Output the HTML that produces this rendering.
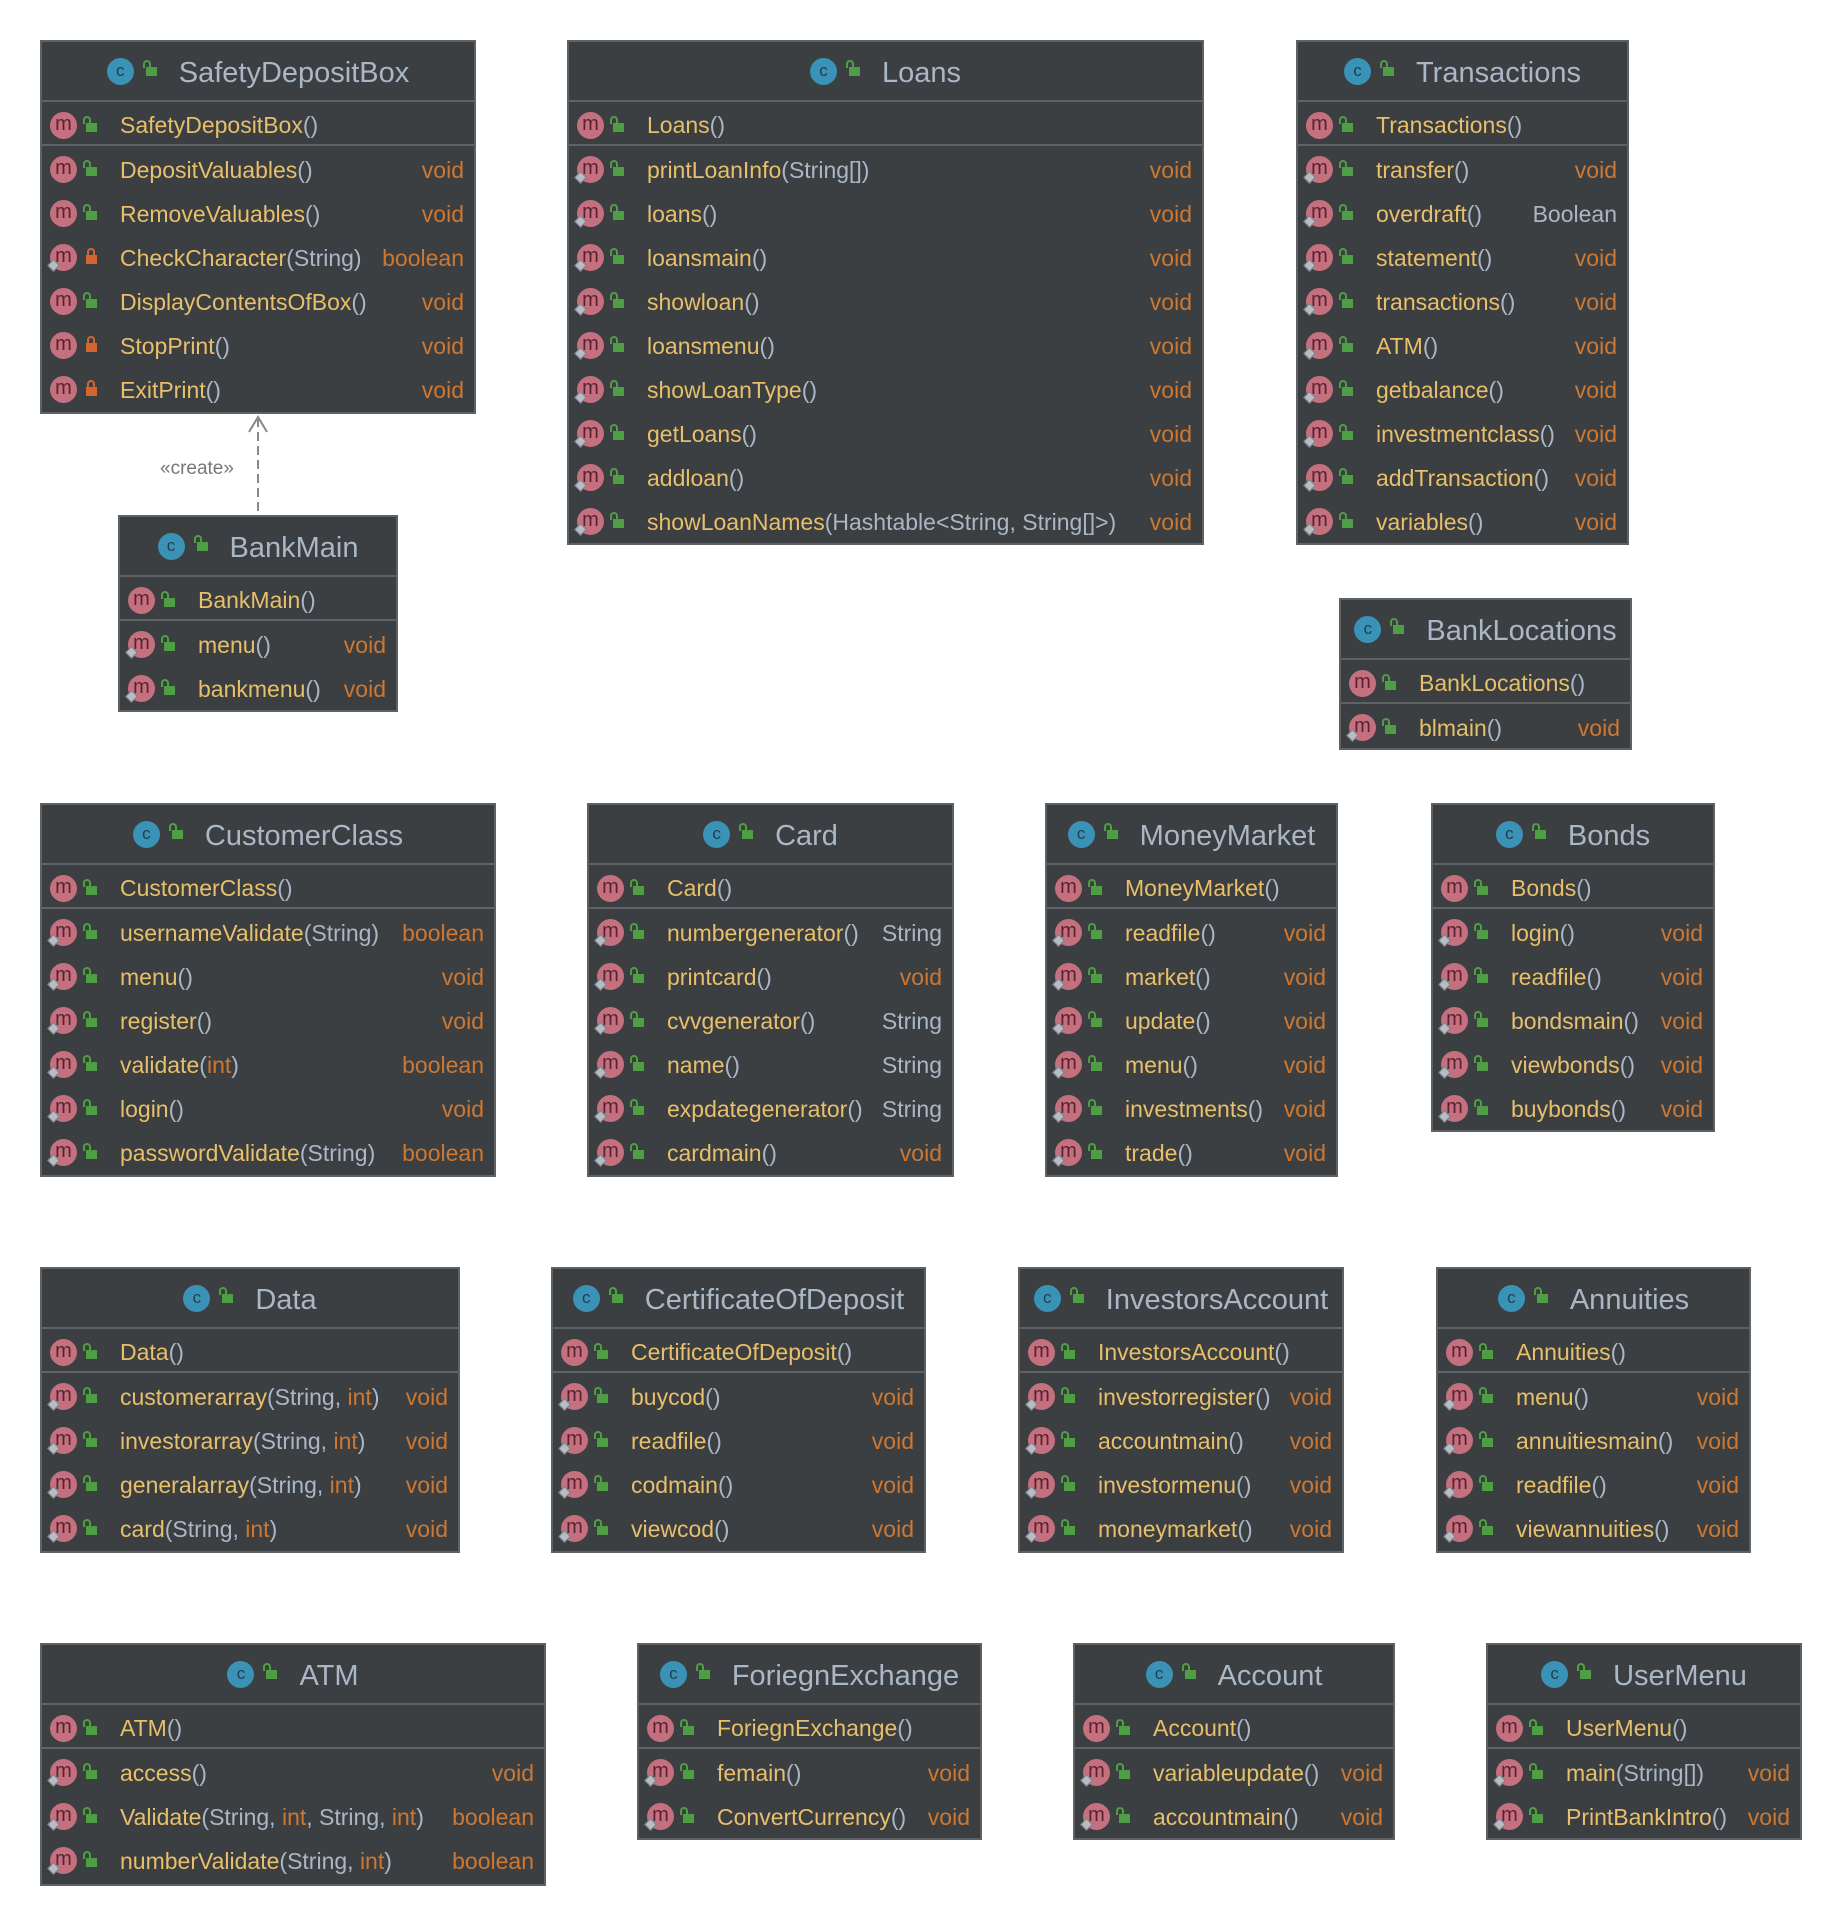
<!DOCTYPE html>
<html><head><meta charset="utf-8"><style>
body{margin:0;width:1842px;height:1924px;background:#fff;position:relative;overflow:hidden;font-family:"Liberation Sans",sans-serif}
.b{position:absolute;background:#3c3f41;border:2px solid #5f6264;box-sizing:border-box;overflow:hidden}
.h{height:58px;padding-top:4px;box-sizing:border-box;display:flex;justify-content:center;align-items:center;font-size:29px;color:#a9b7c6;white-space:nowrap}
.h .ci{width:27px;height:27px;border-radius:50%;background:#3a92b6;color:#1f3f50;font-size:17px;display:inline-flex;align-items:center;justify-content:center;margin-right:12px;margin-top:-4px;flex:none}
.h .lk{margin-right:22px;margin-top:-4px}
.r{height:44px;padding-top:4px;box-sizing:border-box;display:flex;align-items:center;position:relative;padding-left:78px;padding-right:10px;font-size:23px;white-space:nowrap;color:#e8bf6a}
.c{height:46px;border-top:2px solid #5f6264;border-bottom:2px solid #5f6264}
.m{position:absolute;left:8px;top:10px;width:27px;height:27px;border-radius:50%;background:#c5707f;color:#5a2230;font-size:20px;line-height:24px;text-align:center;font-style:normal}
.c ~ .r .m::after{content:"";position:absolute;left:-1px;top:17px;width:7px;height:7px;background:#b8bcc4;transform:rotate(45deg);border:1px solid #7a7e84}
#sdb .r .m::after{display:none}
#sdb .r .m.d::after{display:block}
.lk{display:inline-block;width:11px;height:9px;background:#4f9e46;position:relative;flex:none}
.lk:before{content:"";position:absolute;left:-3px;top:-7px;width:4px;height:6px;border:2px solid #4f9e46;border-bottom:none;border-radius:4px 4px 0 0}
.r .lk{position:absolute;left:44px;top:21px}
.r .lk.pv{background:#d5652f}
.r .lk.pv:before{left:1px;border-color:#d5652f}
.p{color:#a9b7c6}
.o{color:#cc7832}
.t{margin-left:auto;color:#cc7832;padding-left:12px}
.t.g{color:#a9b7c6}
</style></head><body>

<svg style="position:absolute;left:0;top:0" width="1842" height="1924">
<line x1="258" y1="418" x2="258" y2="515" stroke="#888" stroke-width="2" stroke-dasharray="9,5"/>
<polyline points="249,432 258,417 267,432" fill="none" stroke="#888" stroke-width="2"/>
<text x="160" y="474" font-family="Liberation Sans" font-size="19" fill="#777">«create»</text>
</svg>

<div class="b" id="sdb" style="left:40px;top:40px;width:436px;height:374px">
<div class="h"><span class="ci">c</span><span class="lk"></span>SafetyDepositBox</div>
<div class="r c"><i class="m">m</i><span class="lk"></span>SafetyDepositBox<span class="p">()</span></div>
<div class="r"><i class="m">m</i><span class="lk"></span>DepositValuables<span class="p">()</span><span class="t">void</span></div>
<div class="r"><i class="m">m</i><span class="lk"></span>RemoveValuables<span class="p">()</span><span class="t">void</span></div>
<div class="r"><i class="m d">m</i><span class="lk pv"></span>CheckCharacter<span class="p">(String)</span><span class="t">boolean</span></div>
<div class="r"><i class="m">m</i><span class="lk"></span>DisplayContentsOfBox<span class="p">()</span><span class="t">void</span></div>
<div class="r"><i class="m">m</i><span class="lk pv"></span>StopPrint<span class="p">()</span><span class="t">void</span></div>
<div class="r"><i class="m">m</i><span class="lk pv"></span>ExitPrint<span class="p">()</span><span class="t">void</span></div>
</div>

<div class="b" style="left:567px;top:40px;width:637px;height:505px">
<div class="h"><span class="ci">c</span><span class="lk"></span>Loans</div>
<div class="r c"><i class="m">m</i><span class="lk"></span>Loans<span class="p">()</span></div>
<div class="r"><i class="m">m</i><span class="lk"></span>printLoanInfo<span class="p">(String[])</span><span class="t">void</span></div>
<div class="r"><i class="m">m</i><span class="lk"></span>loans<span class="p">()</span><span class="t">void</span></div>
<div class="r"><i class="m">m</i><span class="lk"></span>loansmain<span class="p">()</span><span class="t">void</span></div>
<div class="r"><i class="m">m</i><span class="lk"></span>showloan<span class="p">()</span><span class="t">void</span></div>
<div class="r"><i class="m">m</i><span class="lk"></span>loansmenu<span class="p">()</span><span class="t">void</span></div>
<div class="r"><i class="m">m</i><span class="lk"></span>showLoanType<span class="p">()</span><span class="t">void</span></div>
<div class="r"><i class="m">m</i><span class="lk"></span>getLoans<span class="p">()</span><span class="t">void</span></div>
<div class="r"><i class="m">m</i><span class="lk"></span>addloan<span class="p">()</span><span class="t">void</span></div>
<div class="r"><i class="m">m</i><span class="lk"></span>showLoanNames<span class="p">(Hashtable&lt;String, String[]&gt;)</span><span class="t">void</span></div>
</div>

<div class="b" style="left:1296px;top:40px;width:333px;height:505px">
<div class="h"><span class="ci">c</span><span class="lk"></span>Transactions</div>
<div class="r c"><i class="m">m</i><span class="lk"></span>Transactions<span class="p">()</span></div>
<div class="r"><i class="m">m</i><span class="lk"></span>transfer<span class="p">()</span><span class="t">void</span></div>
<div class="r"><i class="m">m</i><span class="lk"></span>overdraft<span class="p">()</span><span class="t g">Boolean</span></div>
<div class="r"><i class="m">m</i><span class="lk"></span>statement<span class="p">()</span><span class="t">void</span></div>
<div class="r"><i class="m">m</i><span class="lk"></span>transactions<span class="p">()</span><span class="t">void</span></div>
<div class="r"><i class="m">m</i><span class="lk"></span>ATM<span class="p">()</span><span class="t">void</span></div>
<div class="r"><i class="m">m</i><span class="lk"></span>getbalance<span class="p">()</span><span class="t">void</span></div>
<div class="r"><i class="m">m</i><span class="lk"></span>investmentclass<span class="p">()</span><span class="t">void</span></div>
<div class="r"><i class="m">m</i><span class="lk"></span>addTransaction<span class="p">()</span><span class="t">void</span></div>
<div class="r"><i class="m">m</i><span class="lk"></span>variables<span class="p">()</span><span class="t">void</span></div>
</div>

<div class="b" style="left:118px;top:515px;width:280px;height:197px">
<div class="h"><span class="ci">c</span><span class="lk"></span>BankMain</div>
<div class="r c"><i class="m">m</i><span class="lk"></span>BankMain<span class="p">()</span></div>
<div class="r"><i class="m">m</i><span class="lk"></span>menu<span class="p">()</span><span class="t">void</span></div>
<div class="r"><i class="m">m</i><span class="lk"></span>bankmenu<span class="p">()</span><span class="t">void</span></div>
</div>

<div class="b" style="left:1339px;top:598px;width:293px;height:152px">
<div class="h"><span class="ci">c</span><span class="lk"></span>BankLocations</div>
<div class="r c"><i class="m">m</i><span class="lk"></span>BankLocations<span class="p">()</span></div>
<div class="r"><i class="m">m</i><span class="lk"></span>blmain<span class="p">()</span><span class="t">void</span></div>
</div>

<div class="b" style="left:40px;top:803px;width:456px;height:374px">
<div class="h"><span class="ci">c</span><span class="lk"></span>CustomerClass</div>
<div class="r c"><i class="m">m</i><span class="lk"></span>CustomerClass<span class="p">()</span></div>
<div class="r"><i class="m">m</i><span class="lk"></span>usernameValidate<span class="p">(String)</span><span class="t">boolean</span></div>
<div class="r"><i class="m">m</i><span class="lk"></span>menu<span class="p">()</span><span class="t">void</span></div>
<div class="r"><i class="m">m</i><span class="lk"></span>register<span class="p">()</span><span class="t">void</span></div>
<div class="r"><i class="m">m</i><span class="lk"></span>validate<span class="p">(</span><span class="o">int</span><span class="p">)</span><span class="t">boolean</span></div>
<div class="r"><i class="m">m</i><span class="lk"></span>login<span class="p">()</span><span class="t">void</span></div>
<div class="r"><i class="m">m</i><span class="lk"></span>passwordValidate<span class="p">(String)</span><span class="t">boolean</span></div>
</div>

<div class="b" style="left:587px;top:803px;width:367px;height:374px">
<div class="h"><span class="ci">c</span><span class="lk"></span>Card</div>
<div class="r c"><i class="m">m</i><span class="lk"></span>Card<span class="p">()</span></div>
<div class="r"><i class="m">m</i><span class="lk"></span>numbergenerator<span class="p">()</span><span class="t g">String</span></div>
<div class="r"><i class="m">m</i><span class="lk"></span>printcard<span class="p">()</span><span class="t">void</span></div>
<div class="r"><i class="m">m</i><span class="lk"></span>cvvgenerator<span class="p">()</span><span class="t g">String</span></div>
<div class="r"><i class="m">m</i><span class="lk"></span>name<span class="p">()</span><span class="t g">String</span></div>
<div class="r"><i class="m">m</i><span class="lk"></span>expdategenerator<span class="p">()</span><span class="t g">String</span></div>
<div class="r"><i class="m">m</i><span class="lk"></span>cardmain<span class="p">()</span><span class="t">void</span></div>
</div>

<div class="b" style="left:1045px;top:803px;width:293px;height:374px">
<div class="h"><span class="ci">c</span><span class="lk"></span>MoneyMarket</div>
<div class="r c"><i class="m">m</i><span class="lk"></span>MoneyMarket<span class="p">()</span></div>
<div class="r"><i class="m">m</i><span class="lk"></span>readfile<span class="p">()</span><span class="t">void</span></div>
<div class="r"><i class="m">m</i><span class="lk"></span>market<span class="p">()</span><span class="t">void</span></div>
<div class="r"><i class="m">m</i><span class="lk"></span>update<span class="p">()</span><span class="t">void</span></div>
<div class="r"><i class="m">m</i><span class="lk"></span>menu<span class="p">()</span><span class="t">void</span></div>
<div class="r"><i class="m">m</i><span class="lk"></span>investments<span class="p">()</span><span class="t">void</span></div>
<div class="r"><i class="m">m</i><span class="lk"></span>trade<span class="p">()</span><span class="t">void</span></div>
</div>

<div class="b" style="left:1431px;top:803px;width:284px;height:329px">
<div class="h"><span class="ci">c</span><span class="lk"></span>Bonds</div>
<div class="r c"><i class="m">m</i><span class="lk"></span>Bonds<span class="p">()</span></div>
<div class="r"><i class="m">m</i><span class="lk"></span>login<span class="p">()</span><span class="t">void</span></div>
<div class="r"><i class="m">m</i><span class="lk"></span>readfile<span class="p">()</span><span class="t">void</span></div>
<div class="r"><i class="m">m</i><span class="lk"></span>bondsmain<span class="p">()</span><span class="t">void</span></div>
<div class="r"><i class="m">m</i><span class="lk"></span>viewbonds<span class="p">()</span><span class="t">void</span></div>
<div class="r"><i class="m">m</i><span class="lk"></span>buybonds<span class="p">()</span><span class="t">void</span></div>
</div>

<div class="b" style="left:40px;top:1267px;width:420px;height:286px">
<div class="h"><span class="ci">c</span><span class="lk"></span>Data</div>
<div class="r c"><i class="m">m</i><span class="lk"></span>Data<span class="p">()</span></div>
<div class="r"><i class="m">m</i><span class="lk"></span>customerarray<span class="p">(String,&nbsp;</span><span class="o">int</span><span class="p">)</span><span class="t">void</span></div>
<div class="r"><i class="m">m</i><span class="lk"></span>investorarray<span class="p">(String,&nbsp;</span><span class="o">int</span><span class="p">)</span><span class="t">void</span></div>
<div class="r"><i class="m">m</i><span class="lk"></span>generalarray<span class="p">(String,&nbsp;</span><span class="o">int</span><span class="p">)</span><span class="t">void</span></div>
<div class="r"><i class="m">m</i><span class="lk"></span>card<span class="p">(String,&nbsp;</span><span class="o">int</span><span class="p">)</span><span class="t">void</span></div>
</div>

<div class="b" style="left:551px;top:1267px;width:375px;height:286px">
<div class="h"><span class="ci">c</span><span class="lk"></span>CertificateOfDeposit</div>
<div class="r c"><i class="m">m</i><span class="lk"></span>CertificateOfDeposit<span class="p">()</span></div>
<div class="r"><i class="m">m</i><span class="lk"></span>buycod<span class="p">()</span><span class="t">void</span></div>
<div class="r"><i class="m">m</i><span class="lk"></span>readfile<span class="p">()</span><span class="t">void</span></div>
<div class="r"><i class="m">m</i><span class="lk"></span>codmain<span class="p">()</span><span class="t">void</span></div>
<div class="r"><i class="m">m</i><span class="lk"></span>viewcod<span class="p">()</span><span class="t">void</span></div>
</div>

<div class="b" style="left:1018px;top:1267px;width:326px;height:286px">
<div class="h"><span class="ci">c</span><span class="lk"></span>InvestorsAccount</div>
<div class="r c"><i class="m">m</i><span class="lk"></span>InvestorsAccount<span class="p">()</span></div>
<div class="r"><i class="m">m</i><span class="lk"></span>investorregister<span class="p">()</span><span class="t">void</span></div>
<div class="r"><i class="m">m</i><span class="lk"></span>accountmain<span class="p">()</span><span class="t">void</span></div>
<div class="r"><i class="m">m</i><span class="lk"></span>investormenu<span class="p">()</span><span class="t">void</span></div>
<div class="r"><i class="m">m</i><span class="lk"></span>moneymarket<span class="p">()</span><span class="t">void</span></div>
</div>

<div class="b" style="left:1436px;top:1267px;width:315px;height:286px">
<div class="h"><span class="ci">c</span><span class="lk"></span>Annuities</div>
<div class="r c"><i class="m">m</i><span class="lk"></span>Annuities<span class="p">()</span></div>
<div class="r"><i class="m">m</i><span class="lk"></span>menu<span class="p">()</span><span class="t">void</span></div>
<div class="r"><i class="m">m</i><span class="lk"></span>annuitiesmain<span class="p">()</span><span class="t">void</span></div>
<div class="r"><i class="m">m</i><span class="lk"></span>readfile<span class="p">()</span><span class="t">void</span></div>
<div class="r"><i class="m">m</i><span class="lk"></span>viewannuities<span class="p">()</span><span class="t">void</span></div>
</div>

<div class="b" style="left:40px;top:1643px;width:506px;height:243px">
<div class="h"><span class="ci">c</span><span class="lk"></span>ATM</div>
<div class="r c"><i class="m">m</i><span class="lk"></span>ATM<span class="p">()</span></div>
<div class="r"><i class="m">m</i><span class="lk"></span>access<span class="p">()</span><span class="t">void</span></div>
<div class="r"><i class="m">m</i><span class="lk"></span>Validate<span class="p">(String,&nbsp;</span><span class="o">int</span><span class="p">,&nbsp;String,&nbsp;</span><span class="o">int</span><span class="p">)</span><span class="t">boolean</span></div>
<div class="r"><i class="m">m</i><span class="lk"></span>numberValidate<span class="p">(String,&nbsp;</span><span class="o">int</span><span class="p">)</span><span class="t">boolean</span></div>
</div>

<div class="b" style="left:637px;top:1643px;width:345px;height:197px">
<div class="h"><span class="ci">c</span><span class="lk"></span>ForiegnExchange</div>
<div class="r c"><i class="m">m</i><span class="lk"></span>ForiegnExchange<span class="p">()</span></div>
<div class="r"><i class="m">m</i><span class="lk"></span>femain<span class="p">()</span><span class="t">void</span></div>
<div class="r"><i class="m">m</i><span class="lk"></span>ConvertCurrency<span class="p">()</span><span class="t">void</span></div>
</div>

<div class="b" style="left:1073px;top:1643px;width:322px;height:197px">
<div class="h"><span class="ci">c</span><span class="lk"></span>Account</div>
<div class="r c"><i class="m">m</i><span class="lk"></span>Account<span class="p">()</span></div>
<div class="r"><i class="m">m</i><span class="lk"></span>variableupdate<span class="p">()</span><span class="t">void</span></div>
<div class="r"><i class="m">m</i><span class="lk"></span>accountmain<span class="p">()</span><span class="t">void</span></div>
</div>

<div class="b" style="left:1486px;top:1643px;width:316px;height:197px">
<div class="h"><span class="ci">c</span><span class="lk"></span>UserMenu</div>
<div class="r c"><i class="m">m</i><span class="lk"></span>UserMenu<span class="p">()</span></div>
<div class="r"><i class="m">m</i><span class="lk"></span>main<span class="p">(String[])</span><span class="t">void</span></div>
<div class="r"><i class="m">m</i><span class="lk"></span>PrintBankIntro<span class="p">()</span><span class="t">void</span></div>
</div>

</body></html>
